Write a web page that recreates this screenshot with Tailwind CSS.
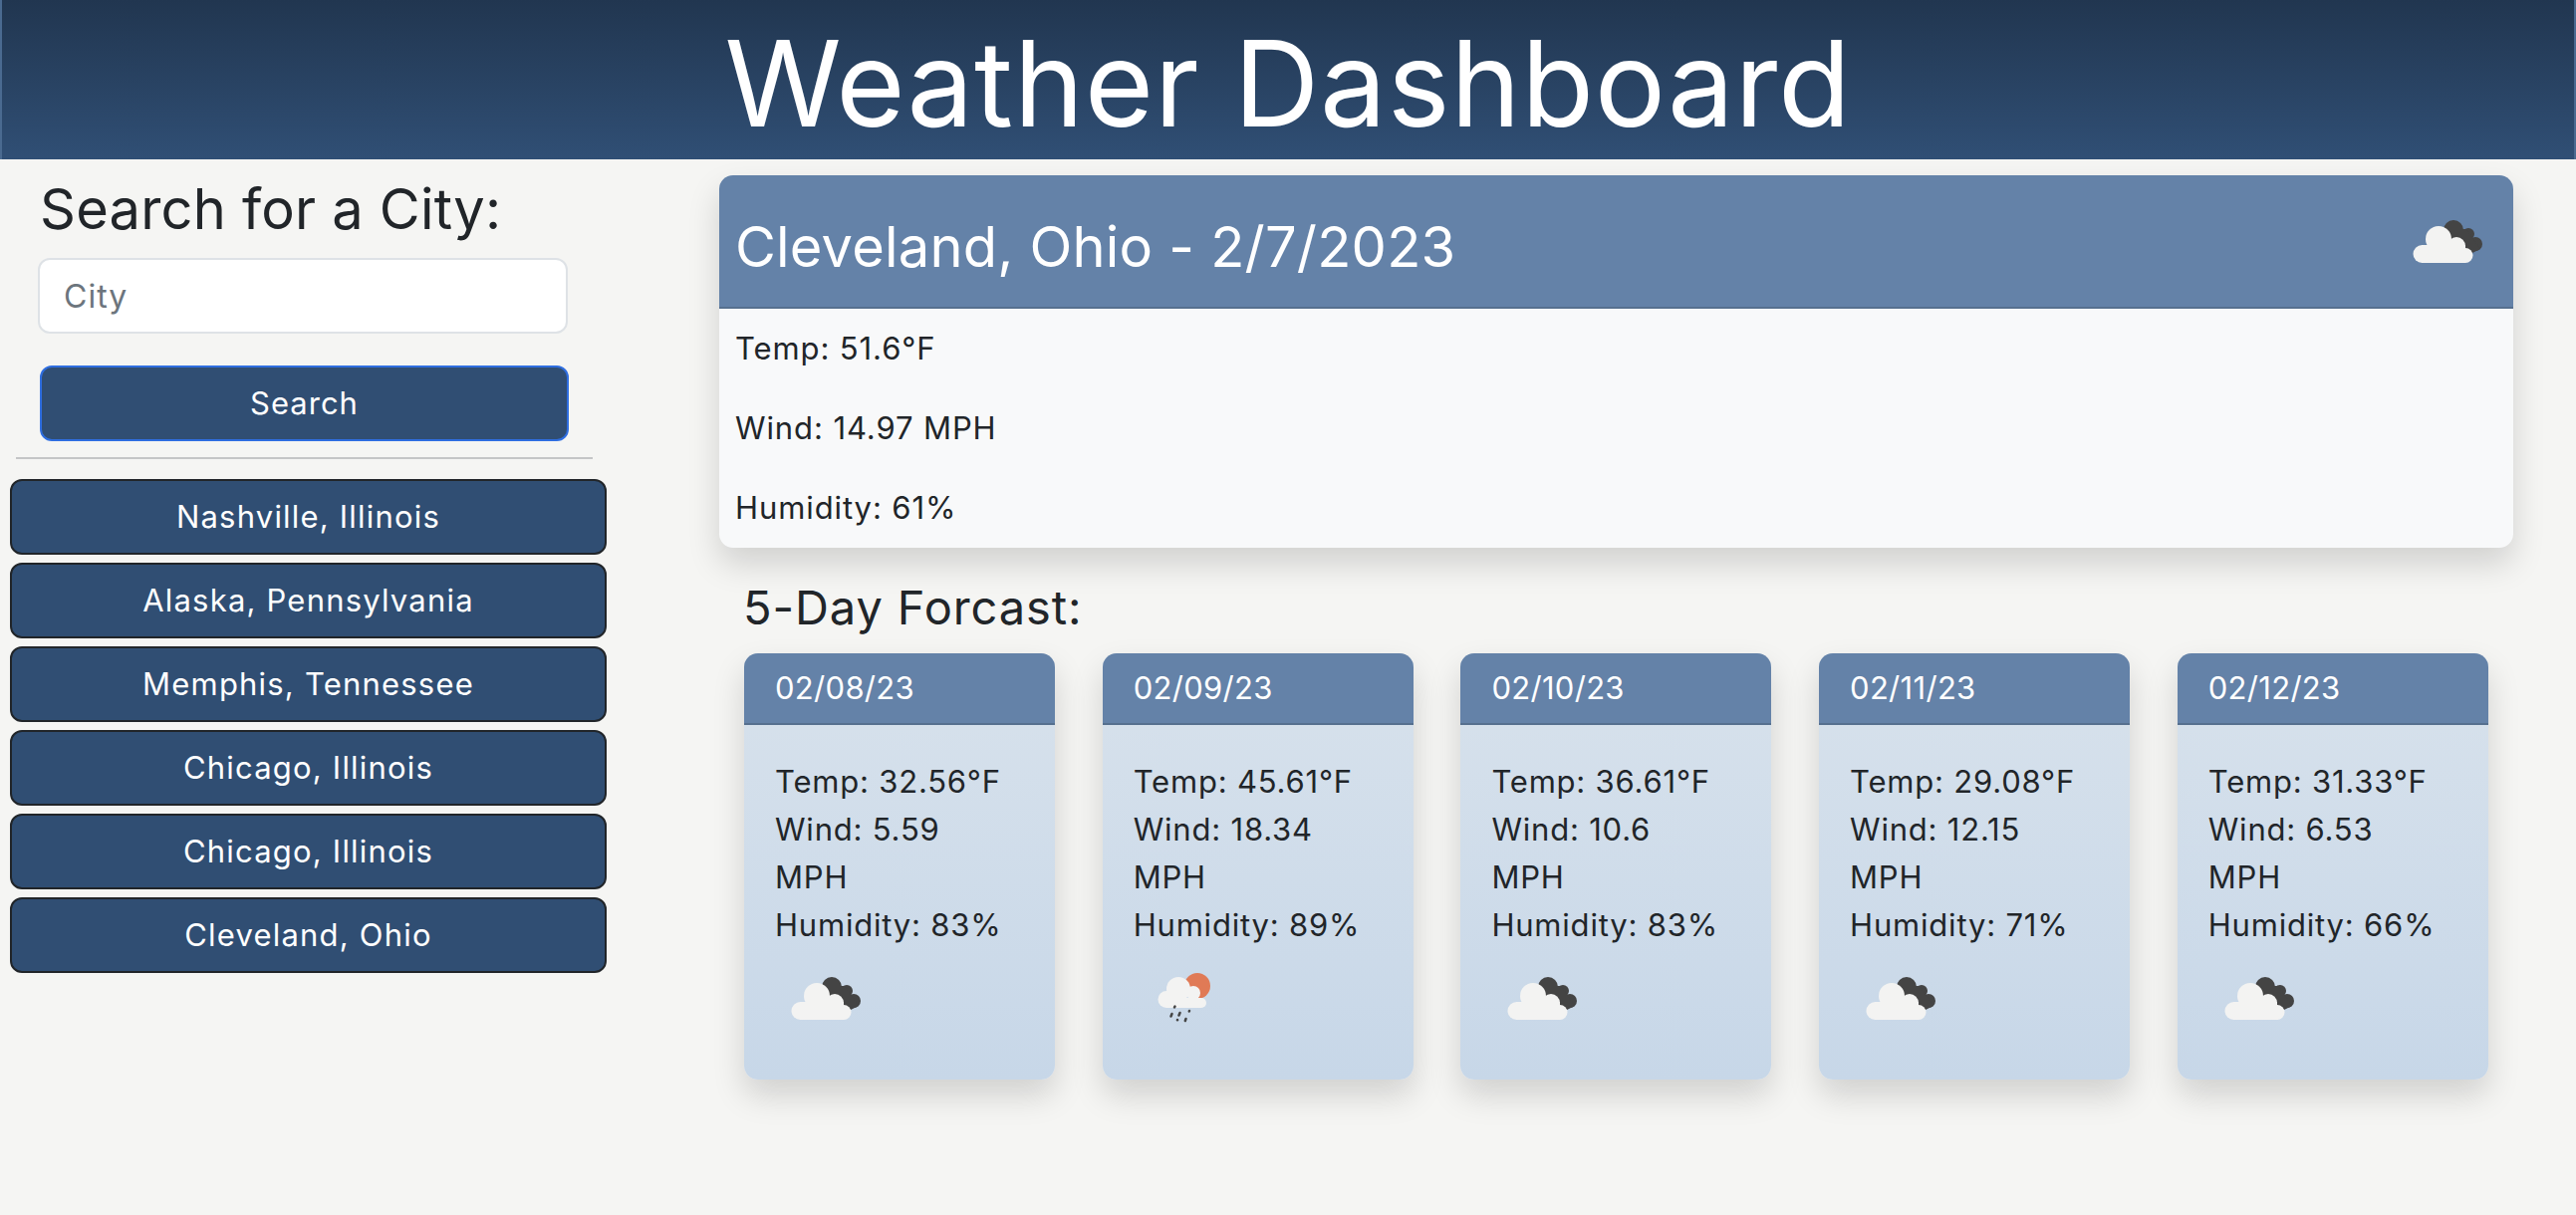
<!DOCTYPE html>
<html lang="en">

<head>
    <meta charset="UTF-8">
    <meta name="viewport" content="width=device-width, initial-scale=1.0">
    <title>Weather Dashboard</title>
    <script src="https://cdn.jsdelivr.net/npm/@tailwindcss/browser@4"></script>
</head>

<body class="bg-[#f5f5f3] text-[#212529] font-[Inter,sans-serif] min-h-[1220px] overflow-hidden">

    <!-- Header -->
    <header class="h-[160px] flex items-center justify-center text-white bg-gradient-to-b from-[#213650] to-[#304f75] border-x-2 border-[#4a6a90]">
        <h1 class="pt-[8px] text-[119px] leading-none tracking-[.7px] font-normal">Weather Dashboard</h1>
    </header>

    <div class="flex">
        <!-- Search sidebar -->
        <aside class="w-[722px] shrink-0 pl-[10px] pt-[14px]">
            <h2 class="ml-[30px] pt-[2px] h-[68px] text-[56px] leading-[68px] tracking-[.2px] font-normal">Search for a City:</h2>
            <input type="text" placeholder="City" class="block mt-[17px] ml-[28px] w-[532px] h-[76px] px-[24px] bg-white border-2 border-[#dee2e6] rounded-[12px] text-[32px] tracking-[1px] placeholder:text-[#6c757d]">
            <button class="block mt-[32px] ml-[30px] w-[531px] h-[76px] bg-[#304e73] text-white text-[31px] tracking-[1px] border-2 border-[#2f6ee0] rounded-[12px]">Search</button>
            <hr class="mt-[16px] ml-[6px] w-[579px] border-t-2 border-[#c4c5c6]">
            <div class="mt-[20px] flex flex-col gap-[8px] w-[599px]">
                <button class="h-[76px] bg-[#304e73] text-white text-[31px] tracking-[1.2px] border-2 border-[#212529] rounded-[12px]">Nashville, Illinois</button>
                <button class="h-[76px] bg-[#304e73] text-white text-[31px] tracking-[1.2px] border-2 border-[#212529] rounded-[12px]">Alaska, Pennsylvania</button>
                <button class="h-[76px] bg-[#304e73] text-white text-[31px] tracking-[1.2px] border-2 border-[#212529] rounded-[12px]">Memphis, Tennessee</button>
                <button class="h-[76px] bg-[#304e73] text-white text-[31px] tracking-[1.2px] border-2 border-[#212529] rounded-[12px]">Chicago, Illinois</button>
                <button class="h-[76px] bg-[#304e73] text-white text-[31px] tracking-[1.2px] border-2 border-[#212529] rounded-[12px]">Chicago, Illinois</button>
                <button class="h-[76px] bg-[#304e73] text-white text-[31px] tracking-[1.2px] border-2 border-[#212529] rounded-[12px]">Cleveland, Ohio</button>
            </div>
        </aside>

        <main class="w-[1801px] pt-[16px]">
            <!-- Current weather -->
            <section class="h-[374px] rounded-[14px] overflow-hidden bg-[#f8f9fa] shadow-[0_16px_32px_rgba(0,0,0,0.15)]">
                <div class="h-[134px] flex items-center justify-between pl-[16px] pr-[17px] bg-[#6482a8] border-b-2 border-[#56708f] text-white">
                    <h2 class="pt-[12px] text-[56px] tracking-[.2px] font-normal">Cleveland, Ohio - 2/7/2023</h2>
                    <svg class="w-[100px] h-[90px] mt-[5px]" viewBox="8 0 100 90">
                        <g fill="#444444"><circle cx="65" cy="31" r="10"/><circle cx="80" cy="35" r="6"/><circle cx="87" cy="45" r="7"/><path d="M60 30 L78 30 L92 50 L80 56 L60 50 Z"/></g>
                        <g fill="#f3f3f2"><circle cx="33.5" cy="55" r="9"/><circle cx="50" cy="40" r="13"/><circle cx="68" cy="47" r="9"/><circle cx="77" cy="56.500" r="7.500"/><rect x="33" y="46" width="44" height="18"/></g>
                    </svg>
                </div>
                <div class="flex flex-col text-[31px] tracking-[.9px]">
                    <p class="h-[80px] flex items-center px-[16px]">Temp: 51.6°F</p>
                    <p class="h-[80px] flex items-center px-[16px]">Wind: 14.97 MPH</p>
                    <p class="h-[80px] flex items-center px-[16px]">Humidity: 61%</p>
                </div>
            </section>

            <h3 class="ml-[24px] mt-[26px] text-[47px] leading-[68px] tracking-[.9px] font-normal">5-Day Forcast:</h3>

            <!-- Forecast cards -->
            <div class="mt-[12px] ml-[25px] flex gap-[47.7px]">
                <article class="w-[312px] h-[428px] rounded-[14px] overflow-hidden shadow-[0_16px_32px_rgba(0,0,0,0.15)] bg-gradient-to-b from-[#d8e2ec] to-[#c7d7e8]">
                    <div class="h-[72px] flex items-center px-[31px] bg-[#6482a8] border-b-2 border-[#56708f] text-white text-[31px] tracking-[.3px]">02/08/23</div>
                    <div class="pl-[31px] pr-[48px] pt-[33px] text-[31px] leading-[48px] tracking-[.8px]">
                        <p>Temp: 32.56°F</p>
                        <p>Wind: 5.59 MPH</p>
                        <p>Humidity: 83%</p>
                        <svg class="w-[100px] h-[90px] mt-[7px]" viewBox="8 0 100 90">
                            <g fill="#444444"><circle cx="65" cy="31" r="10"/><circle cx="80" cy="35" r="6"/><circle cx="87" cy="45" r="7"/><path d="M60 30 L78 30 L92 50 L80 56 L60 50 Z"/></g>
                            <g fill="#f3f3f2"><circle cx="33.5" cy="55" r="9"/><circle cx="50" cy="40" r="13"/><circle cx="68" cy="47" r="9"/><circle cx="77" cy="56.500" r="7.500"/><rect x="33" y="46" width="44" height="18"/></g>
                        </svg>
                    </div>
                </article>
                <article class="w-[312px] h-[428px] rounded-[14px] overflow-hidden shadow-[0_16px_32px_rgba(0,0,0,0.15)] bg-gradient-to-b from-[#d8e2ec] to-[#c7d7e8]">
                    <div class="h-[72px] flex items-center px-[31px] bg-[#6482a8] border-b-2 border-[#56708f] text-white text-[31px] tracking-[.3px]">02/09/23</div>
                    <div class="pl-[31px] pr-[48px] pt-[33px] text-[31px] leading-[48px] tracking-[.8px]">
                        <p>Temp: 45.61°F</p>
                        <p>Wind: 18.34 MPH</p>
                        <p>Humidity: 89%</p>
                        <svg class="w-[100px] h-[90px] mt-[7px]" viewBox="7 0 100 90">
                            <circle cx="71" cy="30" r="13" fill="#e07a56"/>
                            <g fill="#f3f3f2"><circle cx="40" cy="43.500" r="8.500"/><circle cx="52" cy="33" r="12"/><circle cx="67" cy="37" r="7"/><circle cx="75" cy="47" r="5"/><rect x="40" y="42" width="35" height="10"/></g>
                            <g stroke="#444444" stroke-width="2.500" stroke-linecap="round"><path d="M48.500 50.500 L48 51.500"/><path d="M45.500 58 L44.500 60.500"/><path d="M53.500 57 L52.500 59.500"/><path d="M63 55 L62.800 55.500"/><path d="M51 64 L51 64.300"/><path d="M59.500 63 L58.800 65"/></g>
                        </svg>
                    </div>
                </article>
                <article class="w-[312px] h-[428px] rounded-[14px] overflow-hidden shadow-[0_16px_32px_rgba(0,0,0,0.15)] bg-gradient-to-b from-[#d8e2ec] to-[#c7d7e8]">
                    <div class="h-[72px] flex items-center px-[31px] bg-[#6482a8] border-b-2 border-[#56708f] text-white text-[31px] tracking-[.3px]">02/10/23</div>
                    <div class="pl-[31px] pr-[48px] pt-[33px] text-[31px] leading-[48px] tracking-[.8px]">
                        <p>Temp: 36.61°F</p>
                        <p>Wind: 10.6 MPH</p>
                        <p>Humidity: 83%</p>
                        <svg class="w-[100px] h-[90px] mt-[7px]" viewBox="8 0 100 90">
                            <g fill="#444444"><circle cx="65" cy="31" r="10"/><circle cx="80" cy="35" r="6"/><circle cx="87" cy="45" r="7"/><path d="M60 30 L78 30 L92 50 L80 56 L60 50 Z"/></g>
                            <g fill="#f3f3f2"><circle cx="33.5" cy="55" r="9"/><circle cx="50" cy="40" r="13"/><circle cx="68" cy="47" r="9"/><circle cx="77" cy="56.500" r="7.500"/><rect x="33" y="46" width="44" height="18"/></g>
                        </svg>
                    </div>
                </article>
                <article class="w-[312px] h-[428px] rounded-[14px] overflow-hidden shadow-[0_16px_32px_rgba(0,0,0,0.15)] bg-gradient-to-b from-[#d8e2ec] to-[#c7d7e8]">
                    <div class="h-[72px] flex items-center px-[31px] bg-[#6482a8] border-b-2 border-[#56708f] text-white text-[31px] tracking-[.3px]">02/11/23</div>
                    <div class="pl-[31px] pr-[48px] pt-[33px] text-[31px] leading-[48px] tracking-[.8px]">
                        <p>Temp: 29.08°F</p>
                        <p>Wind: 12.15 MPH</p>
                        <p>Humidity: 71%</p>
                        <svg class="w-[100px] h-[90px] mt-[7px]" viewBox="8 0 100 90">
                            <g fill="#444444"><circle cx="65" cy="31" r="10"/><circle cx="80" cy="35" r="6"/><circle cx="87" cy="45" r="7"/><path d="M60 30 L78 30 L92 50 L80 56 L60 50 Z"/></g>
                            <g fill="#f3f3f2"><circle cx="33.5" cy="55" r="9"/><circle cx="50" cy="40" r="13"/><circle cx="68" cy="47" r="9"/><circle cx="77" cy="56.500" r="7.500"/><rect x="33" y="46" width="44" height="18"/></g>
                        </svg>
                    </div>
                </article>
                <article class="w-[312px] h-[428px] rounded-[14px] overflow-hidden shadow-[0_16px_32px_rgba(0,0,0,0.15)] bg-gradient-to-b from-[#d8e2ec] to-[#c7d7e8]">
                    <div class="h-[72px] flex items-center px-[31px] bg-[#6482a8] border-b-2 border-[#56708f] text-white text-[31px] tracking-[.3px]">02/12/23</div>
                    <div class="pl-[31px] pr-[48px] pt-[33px] text-[31px] leading-[48px] tracking-[.8px]">
                        <p>Temp: 31.33°F</p>
                        <p>Wind: 6.53 MPH</p>
                        <p>Humidity: 66%</p>
                        <svg class="w-[100px] h-[90px] mt-[7px]" viewBox="8 0 100 90">
                            <g fill="#444444"><circle cx="65" cy="31" r="10"/><circle cx="80" cy="35" r="6"/><circle cx="87" cy="45" r="7"/><path d="M60 30 L78 30 L92 50 L80 56 L60 50 Z"/></g>
                            <g fill="#f3f3f2"><circle cx="33.5" cy="55" r="9"/><circle cx="50" cy="40" r="13"/><circle cx="68" cy="47" r="9"/><circle cx="77" cy="56.500" r="7.500"/><rect x="33" y="46" width="44" height="18"/></g>
                        </svg>
                    </div>
                </article>
            </div>
        </main>
    </div>

</body>

</html>
